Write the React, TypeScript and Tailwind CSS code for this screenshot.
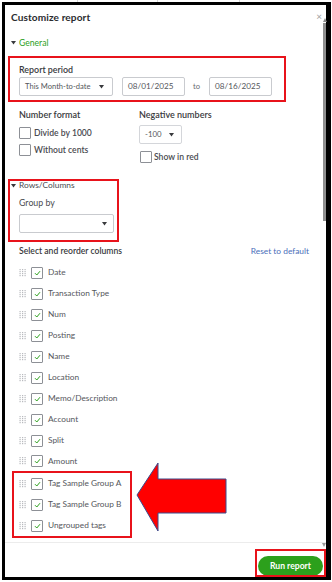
import React from "react";

const FONT = { fontFamily: "Lato, 'Open Sans', Arial, sans-serif" };

function Handle() {
  const dots = [];
  for (let r = 0; r < 4; r++) {
    for (let c = 0; c < 3; c++) {
      dots.push(<rect key={`${r}-${c}`} x={c * 2.5} y={r * 2} width="1.2" height="1.2" fill="#b8babe" />);
    }
  }
  return (
    <svg width="8" height="8" viewBox="0 0 7 8" className="shrink-0">
      {dots}
    </svg>
  );
}

function Check({ checked }: { checked?: boolean }) {
  return (
    <div className="w-[12px] h-[12px] shrink-0 border border-[#8d9096] rounded-[1px] bg-white flex items-center justify-center">
      {checked && (
        <svg width="7" height="6" viewBox="0 0 7 6">
          <path d="M1 3.2 L2.8 5 L6 1.2" fill="none" stroke="#2ca01c" strokeWidth="1" />
        </svg>
      )}
    </div>
  );
}

function Caret() {
  return (
    <svg width="5" height="4" viewBox="0 0 5 4">
      <path d="M0 0 H5 L2.5 3.5 Z" fill="#393a3d" />
    </svg>
  );
}

const COLUMNS = [
  "Date",
  "Transaction Type",
  "Num",
  "Posting",
  "Name",
  "Location",
  "Memo/Description",
  "Account",
  "Split",
];

function Row({ label, h = "h-[21px]" }: { label: string; h?: string }) {
  return (
    <div className={`${h} flex items-center`}>
      <Handle />
      <div className="ml-[4px]">
        <Check checked />
      </div>
      <span className="ml-[5px] text-[8.3px] text-[#55575c] whitespace-nowrap">{label}</span>
    </div>
  );
}

export default function App() {
  return (
    <div className="w-[332px] h-[582px] bg-white overflow-hidden relative" style={FONT}>
      <div className="h-[2px] flex">
        <div className="w-[78px] border-r border-[#d8d8d8]" />
        <div className="w-[80px] border-r border-[#d8d8d8]" />
        <div className="w-[82px] border-r border-[#d8d8d8]" />
      </div>
      <div className="ml-[2px] w-[329px] h-[578px] border-[3px] border-r-[5px] border-black bg-white">
        <div className="relative flex flex-col h-full">
          {/* header */}
          <div className="h-[26px] flex items-center pl-[6px]">
            <span className="text-[10.1px] font-bold text-[#2b2c2f] tracking-[0.1px]">Customize report</span>
          </div>
          <span className="absolute right-[4px] top-[6px] text-[10px] leading-[10px] text-[#a0a0a0]">×</span>

          {/* scrollbar */}
          <div className="absolute right-[0px] top-[13px] w-[3px] flex flex-col items-center">
            <svg width="4" height="4" viewBox="0 0 4 4">
              <path d="M0 4 L2 0 L4 4 Z" fill="#8a8a8a" />
            </svg>
            <div className="w-[3px] h-[198px] bg-[#8f8f8f] mt-[1px]" />
          </div>
          <div className="absolute right-[0px] top-[538px]">
            <svg width="4" height="4" viewBox="0 0 4 4">
              <path d="M0 0 L4 0 L2 4 Z" fill="#9a9a9a" />
            </svg>
          </div>

          {/* body */}
          <div className="flex-1">
            <div className="h-[24px] flex items-center pl-[6px]">
              <Caret />
              <span className="ml-[3px] text-[8.6px] text-[#2ca01c]">General</span>
            </div>

            <div className="ml-[3px] mt-[1px] w-[278px] h-[46px] border-2 border-[#e8131b] pl-[9px]">
              <div className="h-[17px] flex items-end">
                <span className="text-[8.9px] font-semibold text-[#393a3d] leading-[11px]">Report period</span>
              </div>
              <div className="mt-[2px] flex items-center">
                <div className="w-[94px] h-[19px] border border-[#c9cbcf] rounded-[2px] flex items-center pl-[5px] pr-[8px] justify-between">
                  <span className="text-[7.6px] text-[#55575c] whitespace-nowrap">This Month-to-date</span>
                  <Caret />
                </div>
                <div className="ml-[9px] w-[63px] h-[19px] border border-[#c9cbcf] rounded-[2px] flex items-center pl-[5px]">
                  <span className="text-[8.2px] text-[#55575c]">08/01/2025</span>
                </div>
                <span className="ml-[8px] w-[16px] text-[7.6px] text-[#6b6c72]">to</span>
                <div className="w-[63px] h-[19px] border border-[#c9cbcf] rounded-[2px] flex items-center pl-[5px]">
                  <span className="text-[8.2px] text-[#55575c]">08/16/2025</span>
                </div>
              </div>
            </div>

            <div className="mt-[6px] pl-[14px] flex">
              <div className="w-[120px]">
                <div className="h-[14px] flex items-center text-[9px] font-semibold text-[#393a3d]">Number format</div>
                <div className="mt-[5px] h-[12px] flex items-center">
                  <Check />
                  <span className="ml-[3px] text-[8.6px] font-semibold text-[#4a4b50]">Divide by 1000</span>
                </div>
                <div className="mt-[5px] h-[12px] flex items-center">
                  <Check />
                  <span className="ml-[3px] text-[8.6px] font-semibold text-[#4a4b50]">Without cents</span>
                </div>
              </div>
              <div>
                <div className="h-[14px] flex items-center text-[9px] font-semibold text-[#393a3d]">Negative numbers</div>
                <div className="mt-[3px] w-[43px] h-[19px] border border-[#d4d6da] rounded-[2px] flex items-center pl-[5px] pr-[7px] justify-between">
                  <span className="text-[7.8px] text-[#55575c]">-100</span>
                  <Caret />
                </div>
                <div className="mt-[7px] h-[12px] flex items-center ml-[1px]">
                  <Check />
                  <span className="ml-[2px] text-[8.6px] font-semibold text-[#4a4b50]">Show in red</span>
                </div>
              </div>
            </div>

            <div className="ml-[3px] mt-[16px] w-[111px] border-2 border-[#e8131b] pb-[7px]">
              <div className="h-[9px] flex items-center pl-[1px]">
                <Caret />
                <span className="ml-[3px] text-[8.4px] text-[#4a4b50]">Rows/Columns</span>
              </div>
              <div className="pl-[9px]">
                <div className="mt-[6px] h-[14px] flex items-center text-[8.8px] text-[#4a4b50]">Group by</div>
                <div className="mt-[4px] w-[95px] h-[19px] border border-[#c9cbcf] rounded-[2px] flex items-center justify-end pr-[6px]">
                  <Caret />
                </div>
              </div>
            </div>

            <div className="mt-[2px] h-[14px] pl-[14px] pr-[14px] flex items-center justify-between">
              <span className="text-[8.6px] font-semibold text-[#393a3d]">Select and reorder columns</span>
              <span className="text-[8.4px] text-[#4a6fba] mr-[3px]">Reset to default</span>
            </div>

            <div className="mt-[4px] pl-[14px]">
              {COLUMNS.map((c) => (
                <Row key={c} label={c} />
              ))}
              <Row label="Amount" h="h-[20px]" />
            </div>

            <div className="ml-[7px] w-[120px] border-2 border-[#e8131b] pl-[5px]">
              <Row label="Tag Sample Group A" />
              <Row label="Tag Sample Group B" />
              <Row label="Ungrouped tags" />
            </div>
          </div>

          {/* footer */}
          <div className="relative h-[35px] border-t border-[#ececec] flex items-end justify-end pb-[1px] pr-[3px]">
            <div className="w-[65px] h-[20px] rounded-full bg-[#2ca01c] flex items-center justify-center">
              <span className="text-[8.6px] font-bold text-white">Run report</span>
            </div>
            <div className="absolute right-[0px] bottom-[0px] w-[71px] h-[28px] border-2 border-[#e8131b]" />
          </div>

          {/* annotation arrow */}
          <svg className="absolute left-[130px] top-[456px]" width="94" height="72" viewBox="130 456 94 72">
            <path
              d="M132 490 L153 458 L153 474 L221 474 L221 508 L153 508 L153 526 Z"
              fill="#ff0000"
              stroke="#3b4a8c"
              strokeWidth="1"
            />
          </svg>
        </div>
      </div>
    </div>
  );
}
